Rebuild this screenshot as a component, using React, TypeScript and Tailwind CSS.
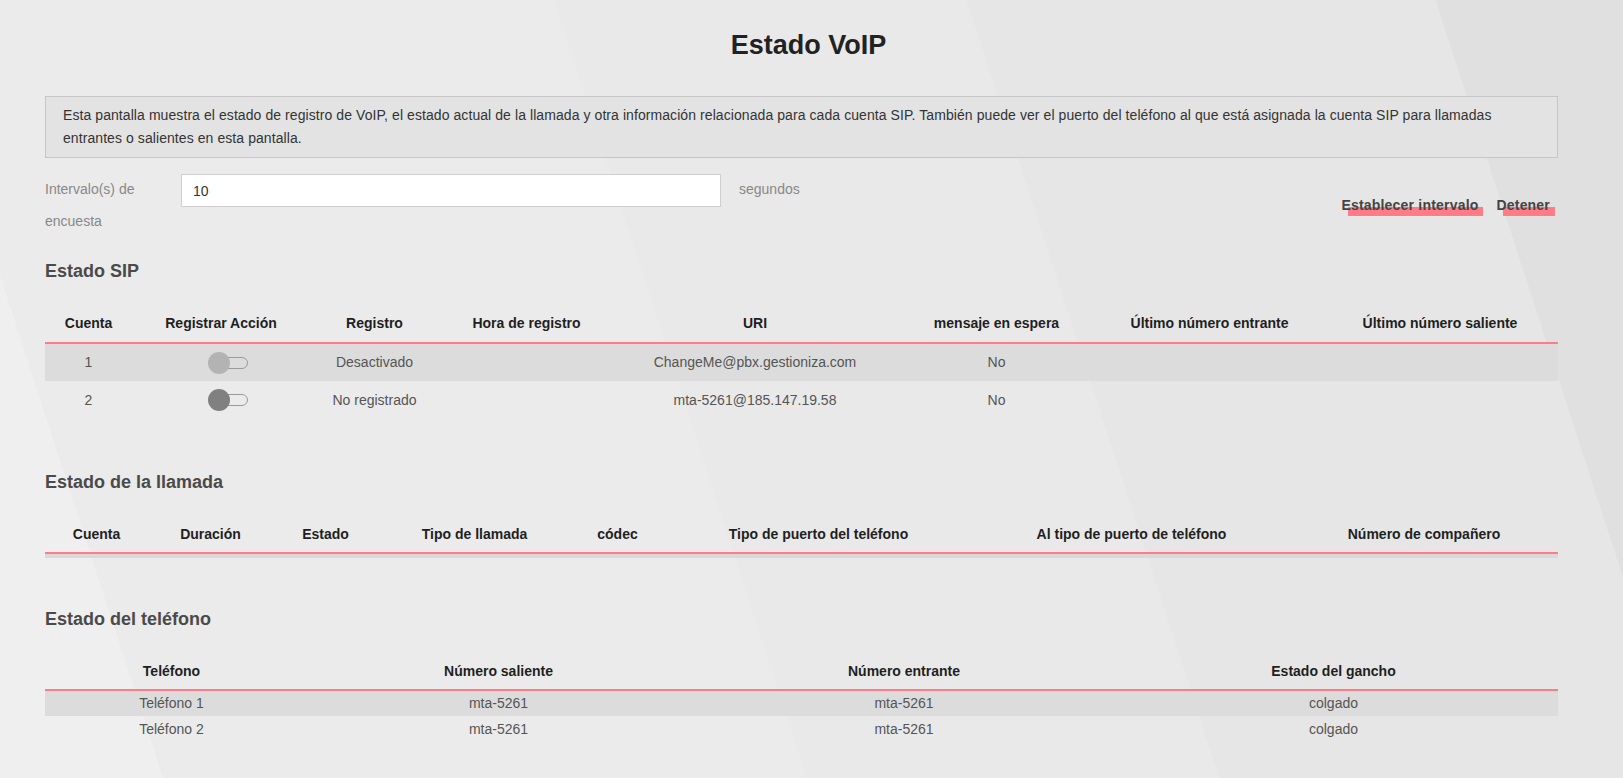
import React from 'react';

type Col = { label: string; w: string };

const sipCols: Col[] = [
    { label: 'Cuenta', w: 'w-[87px]' },
    { label: 'Registrar Acción', w: 'w-[178px]' },
    { label: 'Registro', w: 'w-[129px]' },
    { label: 'Hora de registro', w: 'w-[175px]' },
    { label: 'URI', w: 'w-[282px]' },
    { label: 'mensaje en espera', w: 'w-[201px]' },
    { label: 'Último número entrante', w: 'w-[225px]' },
    { label: 'Último número saliente', w: 'w-[236px]' },
];

const callCols: Col[] = [
    { label: 'Cuenta', w: 'w-[103px]' },
    { label: 'Duración', w: 'w-[125px]' },
    { label: 'Estado', w: 'w-[105px]' },
    { label: 'Tipo de llamada', w: 'w-[193px]' },
    { label: 'códec', w: 'w-[93px]' },
    { label: 'Tipo de puerto del teléfono', w: 'w-[309px]' },
    { label: 'Al tipo de puerto de teléfono', w: 'w-[317px]' },
    { label: 'Número de compañero', w: 'w-[268px]' },
];

const phoneCols: Col[] = [
    { label: 'Teléfono', w: 'w-[253px]' },
    { label: 'Número saliente', w: 'w-[401px]' },
    { label: 'Número entrante', w: 'w-[410px]' },
    { label: 'Estado del gancho', w: 'w-[449px]' },
];

const sipRows = [
    { id: '1', enabled: false, reg: 'Desactivado', time: '', uri: 'ChangeMe@pbx.gestioniza.com', mwi: 'No', lastIn: '', lastOut: '' },
    { id: '2', enabled: true, reg: 'No registrado', time: '', uri: 'mta-5261@185.147.19.58', mwi: 'No', lastIn: '', lastOut: '' },
];

const phoneRows = [
    { phone: 'Teléfono 1', out: 'mta-5261', inc: 'mta-5261', hook: 'colgado' },
    { phone: 'Teléfono 2', out: 'mta-5261', inc: 'mta-5261', hook: 'colgado' },
];

const Toggle = ({ on }: { on: boolean }) => (
    <span className="relative inline-block w-[40px] h-[22px] align-middle translate-x-[7px]">
        <span className="absolute left-[12px] top-[5px] w-[28px] h-[12px] rounded-r-full border border-[#9a9a9a]" />
        <span className={`absolute left-0 top-0 w-[22px] h-[22px] rounded-full ${on ? 'bg-[#808080]' : 'bg-[#b3b3b3]'}`} />
    </span>
);

const LinkButton = ({ text }: { text: string }) => (
    <button className="relative inline-block font-bold text-[14px] leading-[20px] tracking-[0.2px] text-[#444]">
        <span className="absolute left-[7px] -right-[5px] top-[12px] h-[9px] bg-[#ff7b86]" />
        <span className="relative">{text}</span>
    </button>
);

const SectionTitle = ({ children, className = '' }: { children: React.ReactNode; className?: string }) => (
    <h2 className={`text-[18px] leading-[24px] font-bold text-[#4a4a4a] ${className}`}>{children}</h2>
);

const Head = ({ cols, h }: { cols: Col[]; h: string }) => (
    <>
        <colgroup>
            {cols.map(c => <col key={c.label} className={c.w} />)}
        </colgroup>
        <thead>
            <tr>
                {cols.map(c => (
                    <th key={c.label} className={`${h} p-0 text-center font-bold text-[#1f1f1f] border-b-2 border-[#ff7b86] whitespace-nowrap`}>
                        {c.label}
                    </th>
                ))}
            </tr>
        </thead>
    </>
);

export default function App() {
    return (
        <div
            className="min-h-screen w-full text-[14px] text-[#555] bg-[linear-gradient(72deg,#efefef_0%,#efefef_8.7%,#ebebeb_8.7%,#ebebeb_43%,#e9e9e9_43%,#e9e9e9_65%,#e6e6e6_65%,#e6e6e6_90%,#e0e0e0_90%)]"
            style={{ fontFamily: '"Liberation Sans", Arial, sans-serif' }}
        >
            <div className="pl-[45px] pr-[65px] pb-[30px]">
                <h1 className="pt-[30px] pl-[14px] text-center text-[27px] leading-[30px] font-bold text-[#222]">Estado VoIP</h1>

                {/* page description */}
                <div className="mt-[36px] border border-[#c6c6c6] bg-[#e3e3e3] px-[17px] py-[7px] leading-[23px] tracking-[0.075px] text-[#333]">
                    Esta pantalla muestra el estado de registro de VoIP, el estado actual de la llamada y otra información relacionada para cada cuenta SIP. También puede ver el puerto del teléfono al que está asignada la cuenta SIP para llamadas entrantes o salientes en esta pantalla.
                </div>

                {/* polling interval */}
                <div className="mt-[15px] flex items-start">
                    <label className="w-[136px] leading-[32px] text-[#888]">Intervalo(s) de encuesta</label>
                    <input
                        defaultValue="10"
                        className="mt-[1px] h-[33px] w-[540px] border border-[#cfcfcf] bg-white px-[11px] text-[14px] text-[#333] outline-none"
                    />
                    <span className="ml-[18px] leading-[32px] text-[#888]">segundos</span>
                    <div className="ml-auto mr-[8px] mt-[22px] flex gap-[18px]">
                        <LinkButton text="Establecer intervalo" />
                        <LinkButton text="Detener" />
                    </div>
                </div>

                {/* SIP accounts */}
                <SectionTitle className="mt-[22px]">Estado SIP</SectionTitle>
                <table className="mt-[22px] w-full table-fixed border-collapse">
                    <Head cols={sipCols} h="h-[38px]" />
                    <tbody>
                        {sipRows.map((r, i) => (
                            <tr key={r.id} className={i % 2 === 0 ? 'bg-[#dcdcdc]' : ''}>
                                <td className="h-[38px] p-0 text-center">{r.id}</td>
                                <td className="h-[38px] p-0 text-center"><Toggle on={r.enabled} /></td>
                                <td className="h-[38px] p-0 text-center">{r.reg}</td>
                                <td className="h-[38px] p-0 text-center">{r.time}</td>
                                <td className="h-[38px] p-0 text-center">{r.uri}</td>
                                <td className="h-[38px] p-0 text-center">{r.mwi}</td>
                                <td className="h-[38px] p-0 text-center">{r.lastIn}</td>
                                <td className="h-[38px] p-0 text-center">{r.lastOut}</td>
                            </tr>
                        ))}
                    </tbody>
                </table>

                {/* active calls */}
                <SectionTitle className="mt-[51px]">Estado de la llamada</SectionTitle>
                <table className="mt-[22px] w-full table-fixed border-collapse">
                    <Head cols={callCols} h="h-[37px]" />
                    <tbody>
                        <tr>
                            <td colSpan={8} className="p-0">
                                <div className="h-[4px] bg-[#d9d9d9]" />
                            </td>
                        </tr>
                    </tbody>
                </table>

                {/* phone ports */}
                <SectionTitle className="mt-[49px]">Estado del teléfono</SectionTitle>
                <table className="mt-[22px] w-full table-fixed border-collapse">
                    <Head cols={phoneCols} h="h-[37px]" />
                    <tbody>
                        {phoneRows.map((r, i) => (
                            <tr key={r.phone} className={i % 2 === 0 ? 'bg-[#dcdcdc]' : ''}>
                                <td className="h-[26px] p-0 text-center">{r.phone}</td>
                                <td className="h-[26px] p-0 text-center">{r.out}</td>
                                <td className="h-[26px] p-0 text-center">{r.inc}</td>
                                <td className="h-[26px] p-0 text-center">{r.hook}</td>
                            </tr>
                        ))}
                    </tbody>
                </table>
            </div>
        </div>
    );
}
